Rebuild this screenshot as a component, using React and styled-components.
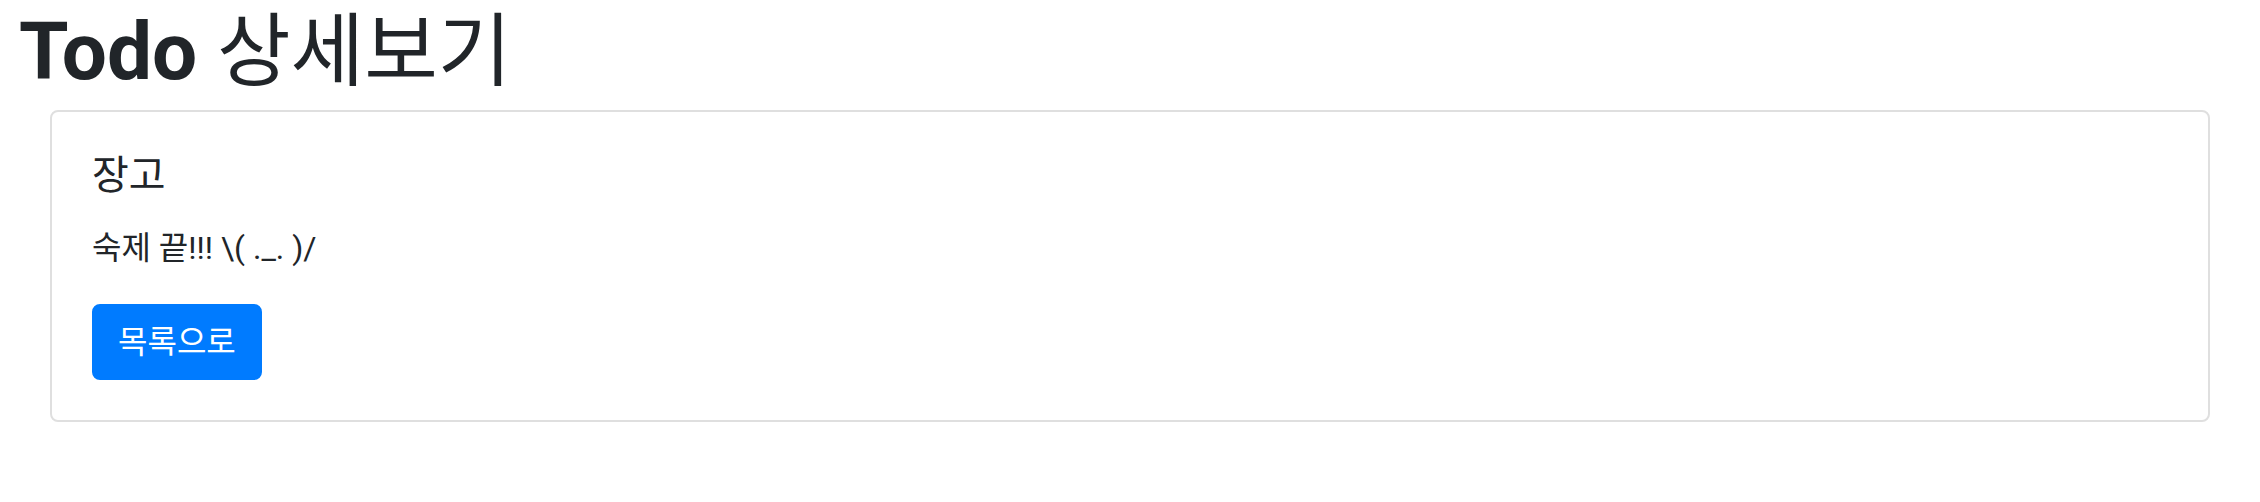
import React from 'react';
import styled, { createGlobalStyle } from 'styled-components';

const GlobalStyle = createGlobalStyle`
  body {
    margin: 0;
    background: #fff;
    color: #212529;
    font-family: Roboto, "Noto Sans CJK KR", sans-serif;
  }
`;

const Page = styled.div`
  padding-top: 4px;
`;

const Heading = styled.h1`
  margin: 0 0 10px 19px;
  font-size: 80px;
  line-height: 96px;
  font-weight: 400;
  white-space: nowrap;
`;

const Latin = styled.span`
  font-weight: 700;
`;

const Card = styled.div`
  margin: 0 50px;
  border: 2px solid #dfdfdf;
  border-radius: 8px;
`;

const CardBody = styled.div`
  padding: 40px;
`;

const Title = styled.h5`
  margin: 0 0 24px;
  font-size: 40px;
  line-height: 48px;
  font-weight: 400;
`;

const Text = styled.p`
  margin: 0 0 32px;
  font-size: 32px;
  line-height: 48px;
`;

const Button = styled.button`
  display: inline-block;
  padding: 12px 24px;
  font-family: inherit;
  font-size: 32px;
  line-height: 48px;
  color: #fff;
  background: #007bff;
  border: 2px solid #007bff;
  border-radius: 8px;
  cursor: pointer;
`;

const App = () => {
  return (
    <Page>
      <GlobalStyle />
      <Heading><Latin>Todo</Latin> 상세보기</Heading>
      <Card>
        <CardBody>
          <Title>장고</Title>
          <Text>숙제 끝!!! \( ._. )/</Text>
          <Button>목록으로</Button>
        </CardBody>
      </Card>
    </Page>
  );
};

export default App;
